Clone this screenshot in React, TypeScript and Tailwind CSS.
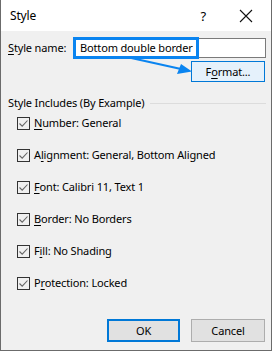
import React from "react";

const font = { fontFamily: '"Noto Sans", "Segoe UI", sans-serif' };

const U = ({ children }: { children: React.ReactNode }) => (
  <span className="underline underline-offset-2">{children}</span>
);

const Check = () => (
  <div className="flex h-[13px] w-[13px] shrink-0 items-center justify-center border border-[#333] bg-[#f0f0f0]">
    <svg width="11" height="11" viewBox="0 0 11 11">
      <path d="M1.5 5.5 L4.2 8.2 L9.5 2.5" fill="none" stroke="#666" strokeWidth="1.1" />
    </svg>
  </div>
);

const rows: [string, string, string][] = [
  ["", "N", "umber: General"],
  ["A", "l", "ignment: General, Bottom Aligned"],
  ["", "F", "ont: Calibri 11, Text 1"],
  ["", "B", "order: No Borders"],
  ["F", "i", "ll: No Shading"],
  ["P", "r", "otection: Locked"],
];

export default function App() {
  return (
    <div
      className="h-[351px] w-[273px] bg-white text-[11px] leading-[16px] tracking-[-0.15px] text-black"
      style={font}
    >
      <div className="relative flex h-[351px] w-[272px] flex-col border-x border-b border-[#6b6b6b] bg-[#f0f0f0]">
        {/* title bar */}
        <div className="flex h-[31px] items-center bg-white pl-[9px] pr-[18px]">
          <span className="text-[12px]">Style</span>
          <span className="ml-auto mr-[33px] text-[13px]">?</span>
          <svg width="14" height="14" viewBox="0 0 14 14">
            <path d="M1 1 L13 13 M13 1 L1 13" stroke="#111" strokeWidth="1.1" />
          </svg>
        </div>

        {/* style name */}
        <div className="mt-[7px] flex items-center pl-[7px]">
          <span className="w-[65px] whitespace-nowrap">
            <U>S</U>tyle name:
          </span>
          <div className="flex h-[20px] w-[193px] items-center whitespace-nowrap border border-[#7a7a7a] bg-white pl-[6px]">
            Bottom double border
          </div>
        </div>

        <div className="mt-[3px] flex justify-end pr-[6px]">
          <div className="flex h-[21px] w-[74px] items-center justify-center border border-[#0078d7] bg-[#e5f1fb]">
            F<U>o</U>rmat...
          </div>
        </div>

        {/* annotation overlay */}
        <div className="pointer-events-none absolute left-[72px] top-[37px] h-[22px] w-[126px] border-[3px] border-[#0a84f0]" />
        <svg className="pointer-events-none absolute left-0 top-0" width="272" height="100">
          <path d="M128 57.5 L180 69" stroke="#0a84f0" strokeWidth="2" fill="none" />
          <path d="M191 71.5 L176 74 L180 64 Z" fill="#0a84f0" />
        </svg>

        {/* group */}
        <div className="mt-[13px] flex items-center pl-[7px] pr-[5px]">
          <span className="whitespace-nowrap">Style Includes (By Example)</span>
          <div className="ml-[6px] h-px flex-1 bg-[#dcdcdc]" />
        </div>

        <div className="mt-[4px] flex flex-col gap-[16px] pl-[16px]">
          {rows.map(([a, u, b], i) => (
            <div key={i} className="flex h-[16px] items-center gap-[4px]">
              <Check />
              <span className="whitespace-nowrap">
                {a}
                <U>{u}</U>
                {b}
              </span>
            </div>
          ))}
        </div>

        <div className="mt-auto mb-[8px] flex justify-end gap-[11px] pr-[6px]">
          <div className="flex h-[23px] w-[73px] items-center justify-center border-2 border-[#0078d7] bg-[#e1e1e1]">
            OK
          </div>
          <div className="flex h-[23px] w-[74px] items-center justify-center border border-[#adadad] bg-[#e1e1e1]">
            Cancel
          </div>
        </div>
      </div>
    </div>
  );
}
